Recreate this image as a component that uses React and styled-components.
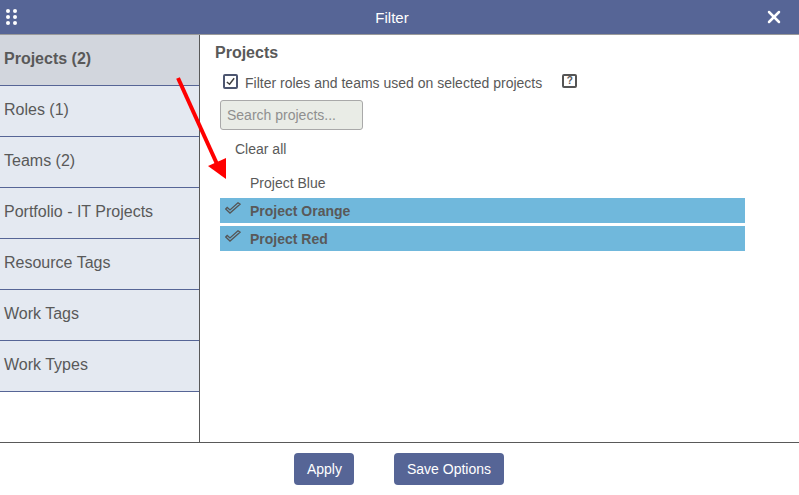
import React from "react";
import styled, { createGlobalStyle } from "styled-components";
import { FiX } from "react-icons/fi";

const GlobalStyle = createGlobalStyle`
  html, body {
    margin: 0;
    padding: 0;
    background: #fff;
  }
  body {
    font-family: "Liberation Sans", Arial, sans-serif;
    color: #595959;
  }
`;

const Dialog = styled.div`
  position: relative;
  width: 799px;
  height: 495px;
  display: flex;
  flex-direction: column;
  overflow: hidden;
`;

const Header = styled.div`
  height: 34px;
  flex: none;
  background: #566596;
  border-bottom: 1px solid #9a9a9a;
  display: flex;
  align-items: center;
  justify-content: space-between;
  padding: 0 17px 0 6px;
  color: #fff;
  font-size: 15px;
`;

const Grip = styled.svg`
  width: 11px;
  height: 16px;
`;

const HeaderTitle = styled.div`
  flex: 1;
  text-align: center;
  padding-left: 3px;
`;

const Body = styled.div`
  flex: 1;
  display: flex;
  min-height: 0;
`;

const Sidebar = styled.div`
  width: 199px;
  flex: none;
  border-right: 1px solid #595959;
`;

const SideItem = styled.div`
  box-sizing: border-box;
  height: 51px;
  padding: 0 0 2px 4px;
  border-bottom: 1px solid #566596;
  background: ${(p) => (p.$active ? "#d2d6dd" : "#e4e9f1")};
  font-weight: ${(p) => (p.$active ? "bold" : "normal")};
  font-size: 16px;
  display: flex;
  align-items: center;
`;

const Main = styled.div`
  flex: 1;
  padding: 8px 54px 0 20px;
`;

const Title = styled.div`
  font-size: 16px;
  font-weight: bold;
  line-height: 19px;
  margin-left: -5px;
`;

const FilterRow = styled.div`
  display: flex;
  align-items: center;
  height: 20px;
  margin-top: 11px;
  padding-left: 3px;
  font-size: 14px;
`;

const CheckBox = styled.span`
  box-sizing: border-box;
  width: 15px;
  height: 15px;
  border: 2px solid #4d5670;
  border-radius: 2px;
  margin: -3px 7px 0 0;
  display: flex;
  align-items: center;
  justify-content: center;
  svg {
    width: 11px;
    height: 11px;
  }
`;

const HelpBox = styled.span`
  box-sizing: border-box;
  width: 15px;
  height: 14px;
  border: 2px solid #555;
  border-radius: 2px;
  margin: -4px 0 0 20px;
  font-size: 10px;
  font-weight: bold;
  line-height: 10px;
  text-align: center;
`;

const SearchInput = styled.input`
  display: block;
  box-sizing: border-box;
  width: 143px;
  height: 30px;
  margin-top: 7px;
  padding: 0 6px;
  background: #e9ece6;
  border: 1px solid #a9a9a9;
  border-radius: 3px;
  font-family: inherit;
  font-size: 14px;
  outline: none;
  &::placeholder {
    color: #8f8f8f;
    opacity: 1;
  }
`;

const ClearAll = styled.div`
  font-size: 14px;
  line-height: 16px;
  margin: 11px 0 13px 15px;
`;

const List = styled.div`
  display: flex;
  flex-direction: column;
  gap: 3px;
`;

const Row = styled.div`
  height: 25px;
  display: flex;
  align-items: center;
  font-size: 14px;
  background: ${(p) => (p.$selected ? "#70b8dc" : "transparent")};
  font-weight: ${(p) => (p.$selected ? "bold" : "normal")};
`;

const CheckSlot = styled.span`
  width: 30px;
  flex: none;
  display: flex;
  padding-left: 5px;
  margin-top: -5px;
  box-sizing: border-box;
`;

const Footer = styled.div`
  height: 52px;
  flex: none;
  border-top: 1px solid #595959;
  display: flex;
  justify-content: center;
  align-items: center;
  gap: 40px;
  padding-right: 1px;
`;

const Button = styled.button`
  height: 32px;
  padding: 0 12.5px;
  background: #566596;
  color: #fff;
  border: none;
  border-radius: 4px;
  font-family: inherit;
  font-size: 14px;
`;

const Arrow = styled.svg`
  position: absolute;
  left: 170px;
  top: 70px;
  width: 60px;
  height: 110px;
`;

const projects = [
  { name: "Project Blue", selected: false },
  { name: "Project Orange", selected: true },
  { name: "Project Red", selected: true },
];

const sections = [
  "Projects (2)",
  "Roles (1)",
  "Teams (2)",
  "Portfolio - IT Projects",
  "Resource Tags",
  "Work Tags",
  "Work Types",
];

const DoubleCheck = () => (
  <svg width="16" height="12" viewBox="0 0 16 12" fill="none" stroke="#555" strokeWidth="1.3">
    <path d="M0.7 7 L2.2 5.5 L5 8 L13 0.8 L15 2.2 L5 11 Z" />
  </svg>
);

const App = () => {
  return (
    <Dialog>
      <GlobalStyle />
      <Header>
        <Grip viewBox="0 0 11 16" fill="#fff">
          {[2, 8, 14].map((y) =>
            [2, 9].map((x) => <circle key={`${x}-${y}`} cx={x} cy={y} r="2" />)
          )}
        </Grip>
        <HeaderTitle>Filter</HeaderTitle>
        <FiX size={20} strokeWidth={3} style={{ marginRight: -2 }} />
      </Header>
      <Body>
        <Sidebar>
          {sections.map((s, i) => (
            <SideItem key={s} $active={i === 0}>
              {s}
            </SideItem>
          ))}
        </Sidebar>
        <Main>
          <Title>Projects</Title>
          <FilterRow>
            <CheckBox>
              <svg viewBox="0 0 12 12" fill="none" stroke="#404040" strokeWidth="1.6">
                <path d="M2 6.5 L5 9 L10 2.5" />
              </svg>
            </CheckBox>
            Filter roles and teams used on selected projects
            <HelpBox>?</HelpBox>
          </FilterRow>
          <SearchInput placeholder="Search projects..." readOnly />
          <ClearAll>Clear all</ClearAll>
          <List>
            {projects.map((p) => (
              <Row key={p.name} $selected={p.selected}>
                <CheckSlot>{p.selected && <DoubleCheck />}</CheckSlot>
                {p.name}
              </Row>
            ))}
          </List>
        </Main>
      </Body>
      <Footer>
        <Button>Apply</Button>
        <Button>Save Options</Button>
      </Footer>
      <Arrow viewBox="0 0 60 110">
        <path d="M8 8 L47 94" stroke="#f00" strokeWidth="4" fill="none" />
        <path d="M38 96 L56 88 L56 109 Z" fill="#f00" />
      </Arrow>
    </Dialog>
  );
};

export default App;
